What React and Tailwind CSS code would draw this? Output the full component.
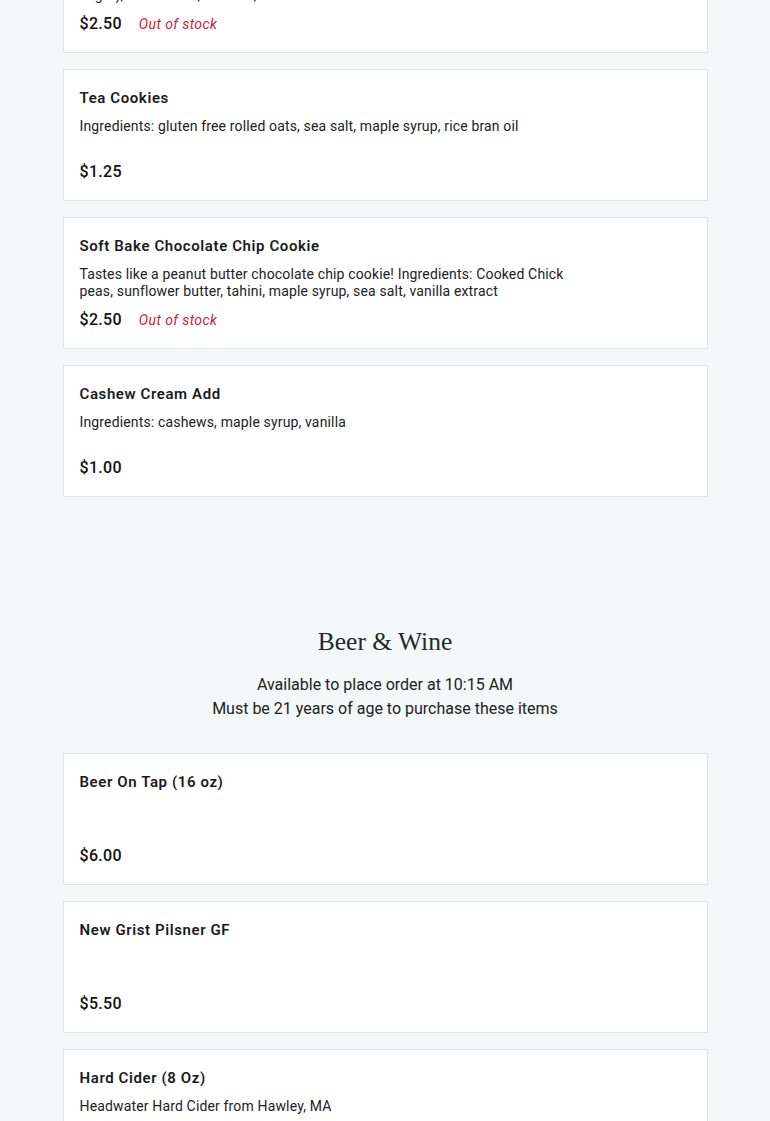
const desserts = [
  {
    name: "Oat Date Bar",
    desc: "Ingredients: rolled oats, dates, almond butter, maple syrup (or coconut sugar), coconut oil, sea salt, vanilla extract",
    price: "$2.50",
    out: true,
  },
  {
    name: "Tea Cookies",
    desc: "Ingredients: gluten free rolled oats, sea salt, maple syrup, rice bran oil",
    price: "$1.25",
  },
  {
    name: "Soft Bake Chocolate Chip Cookie",
    desc: "Tastes like a peanut butter chocolate chip cookie! Ingredients: Cooked Chick peas, sunflower butter, tahini, maple syrup, sea salt, vanilla extract",
    price: "$2.50",
    out: true,
  },
  {
    name: "Cashew Cream Add",
    desc: "Ingredients: cashews, maple syrup, vanilla",
    price: "$1.00",
  },
];

const drinks = [
  { name: "Beer On Tap (16 oz)", desc: "", price: "$6.00" },
  { name: "New Grist Pilsner GF", desc: "", price: "$5.50" },
  { name: "Hard Cider (8 Oz)", desc: "Headwater Hard Cider from Hawley, MA", price: "$6.00" },
];

const ItemCard = ({ item }) => (
  <div className="bg-white border border-[#dfe6e6] px-4 pt-[17px] pb-[17px]">
    <h3 className="text-[15px] leading-[22px] font-semibold text-[#1b1b1b] tracking-[0.6px]">
      {item.name}
    </h3>
    <p className="mt-[9px] h-[34px] max-w-[490px] text-[14px] leading-[17px] text-[#222] tracking-[0.15px]">
      {item.desc}
    </p>
    <div className="mt-[9px] h-[22px] flex items-center gap-[17px]">
      <span className="text-[16px] font-medium text-[#111] tracking-[0.3px]">{item.price}</span>
      {item.out && (
        <span className="text-[14px] italic text-[#d2202f] tracking-[0.4px]">Out of stock</span>
      )}
    </div>
  </div>
);

const App = () => {
  return (
    <div className="min-h-screen bg-[#f4f8f8] font-['Roboto',sans-serif] overflow-hidden">
      <div className="w-[645px] mx-auto -mt-[79px]">
        <div className="flex flex-col gap-4">
          {desserts.map((item) => (
            <ItemCard key={item.name} item={item} />
          ))}
        </div>

        <div className="pt-[127px] pb-[32px] text-center text-[#1f2b2b]">
          <h2 className="text-[25.5px] leading-[36px] font-['Liberation_Serif',serif]">
            Beer &amp; Wine
          </h2>
          <div className="mt-[13px] text-[16px] leading-[24px] text-[#222]">
            <p>Available to place order at 10:15 AM</p>
            <p>Must be 21 years of age to purchase these items</p>
          </div>
        </div>

        <div className="flex flex-col gap-4 pb-10">
          {drinks.map((item) => (
            <ItemCard key={item.name} item={item} />
          ))}
        </div>
      </div>
    </div>
  );
};

export default App;
